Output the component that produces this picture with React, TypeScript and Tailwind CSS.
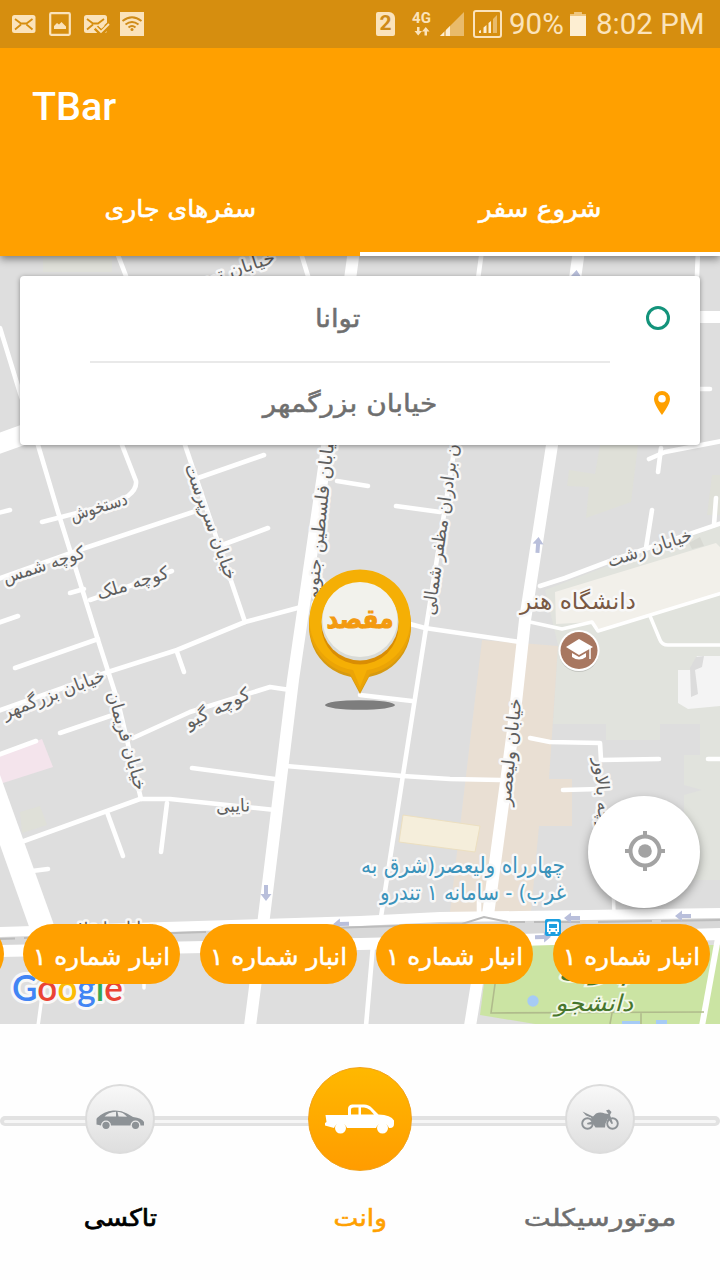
import React from "react";

type Pt = string;

const thinRoads: Pt[] = [
  "M116 250L126 276",
  "M300 250L308 276",
  "M0 328L20 393L38 445L58 512L98 640L118 702L141 799",
  "M122 445L136 481Q137 489 128 496L108 505L42 522",
  "M185 445L245 622",
  "M198 478L264 455",
  "M-2 579L85 548L193 512",
  "M222 545L268 528",
  "M70 593L84 589",
  "M-2 513L10 510",
  "M-2 623L18 616",
  "M15 668L98 639",
  "M90 600L172 571",
  "M-2 711L108 672L177 650L245 622L305 606",
  "M177 652L184 672",
  "M60 733L110 716",
  "M133 738L190 712L270 687L290 690",
  "M-2 755L36 741",
  "M192 768L275 779",
  "M24 841L107 811L140 799L170 799L275 810",
  "M107 812L123 856",
  "M167 803L161 852",
  "M32 871L48 869",
  "M286 766L403 776L450 779L500 780",
  "M482 250L455 445L426 628L403 775L381 917",
  "M373 945L366 1026",
  "M337 481L368 486",
  "M396 506L440 512",
  "M410 624L425 628L520 642",
  "M360 695L412 701",
  "M698 250L697 276",
  "M700 389L710 389",
  "M649 459L665 452L722 441",
  "M661 448L658 472",
  "M652 510L646 548",
  "M716 498L714 525",
  "M540 586L565 578L610 561L722 523",
  "M530 738L550 742L600 743L601 760L659 759",
  "M708 759L722 759",
  "M563 790L600 789",
  "M479 915L479 900",
  "M718 938L702 1026",
];

const hairRoads: Pt[] = [
  "M530 622L562 629L592 622L598 631L722 593",
  "M650 616L660 640Q662 645 668 645L722 645",
  "M613 885L614 912",
  "M42 996L38 1026",
  "M144 980L144 988",
  "M710 1016L722 1018",
];

const wideRoads: Pt[] = [
  "M354 250L328 440L293 680L263 925L250 1026",
  "M579 250L552 445L525 620L513 730L488 915L470 1026",
  "M698 317L722 317",
];

interface Label {
  t: string;
  x: number;
  y: number;
  r: number;
  w: number;
  s?: number;
  c?: string;
}

const labels: Label[] = [
  { t: "خیابان توس", x: 231, y: 272, r: -18, w: 92 },
  { t: "دستخوش", x: 99, y: 508, r: -17, w: 59 },
  { t: "کوچه شمس", x: 44, y: 566, r: -18, w: 85 },
  { t: "کوچه ملک", x: 133, y: 584, r: -17, w: 74 },
  { t: "خیابان سرپرست", x: 210, y: 522, r: 70, w: 122 },
  { t: "خیابان فلسطین جنوبی", x: 321, y: 519, r: -84, w: 176 },
  { t: "خیابان برادران مظفر شمالی", x: 444, y: 514, r: -82, w: 204 },
  { t: "خیابان بزرگمهر", x: 54, y: 695, r: -21, w: 108 },
  { t: "خیابان فریمان", x: 126, y: 741, r: 74, w: 102 },
  { t: "کوچه گیو", x: 218, y: 709, r: -26, w: 70 },
  { t: "نایبی", x: 233, y: 807, r: -2, w: 34 },
  { t: "خیابان ولیعصر", x: 511, y: 752, r: -84, w: 108 },
  { t: "خیابان رشت", x: 650, y: 549, r: -18, w: 88 },
  { t: "کوچه بالاور", x: 602, y: 799, r: 86, w: 82 },
  { t: "خیابان انقلاب", x: 110, y: 930, r: -1, w: 96 },
  { t: "دانشگاه هنر", x: 578, y: 603, r: 0, w: 116, s: 23, c: "#795944" },
  { t: "چهارراه ولیعصر(شرق به", x: 463, y: 867, r: 0, w: 204, s: 22, c: "#3b93bb" },
  { t: "غرب) - سامانه ۱ تندرو", x: 473, y: 894, r: 0, w: 186, s: 22, c: "#3b93bb" },
];

function MapLabel({ t, x, y, r, w, s = 18, c = "#5f5f5f" }: Label) {
  return (
    <text
      transform={`translate(${x} ${y}) rotate(${r})`}
      y={s * 0.27}
      textAnchor="middle"
      textLength={w}
      lengthAdjust="spacingAndGlyphs"
      direction="rtl"
      fontSize={s}
      fill={c}
      stroke="#f8f8f8"
      strokeWidth={5}
      strokeLinejoin="round"
      paintOrder="stroke"
    >
      {t}
    </text>
  );
}

function Arrow({ x, y, r }: { x: number; y: number; r: number }) {
  return (
    <path
      transform={`translate(${x} ${y}) rotate(${r})`}
      d="M0 -8L5.5 -1H2V8H-2V-1H-5.5Z"
      fill="#b9bfdb"
    />
  );
}

function CityMap() {
  return (
    <svg
      viewBox="0 256 720 768"
      className="absolute inset-0 h-full w-full font-['DejaVu_Sans',sans-serif]"
    >
      <rect x="0" y="256" width="720" height="768" fill="#dedede" />
      <path d="M43 256H112V272H43Z" fill="#dfe0d9" />
      <path d="M600 445H638L631 502L586 518L589 487L567 486L569 470L595 474Z" fill="#dfe0d8" />
      <path d="M712 475H720V515H707Z" fill="#dfe0d8" />
      <path d="M20 812L40 806L47 825L22 833Z" fill="#dfe0d8" />
      <path d="M0 755L42 739L53 767L3 783H0Z" fill="#f4e4ec" />
      <path d="M545 590L610 565L720 526V795L684 785V755H700V724H660V740H606V724H553L558 645Z" fill="#e1e3dd" />
      <path d="M684 795L720 785V880H684Z" fill="#e1e3dd" />
      <path d="M555 592L716 543L720 547V594L600 630L592 622L556 624Z" fill="#f2f0ea" />
      <path d="M689 543L700 537L704 546L692 549ZM692 547L699 552" fill="#d8d9d3" />
      <path d="M678 670H690L697 656H720V706L688 709L678 703Z" fill="#f4f4f4" />
      <path d="M690 668L696 657L704 656L702 667L695 670L698 694L691 697Z" fill="#dcdcdc" />
      <path d="M482 640L558 646L549 779H572V826H539L531 912H450Z" fill="#e9dfd3" />
      <path d="M403 815L480 826L475 852L399 842Z" fill="#f5eedb" stroke="#ecdfc0" strokeWidth="1" />
      <path d="M0 775L54 925L56 935H32L0 845Z" fill="#fff" />
      <path d="M-5 445L42 428" stroke="#fff" strokeWidth="20" />
      <g fill="none" stroke="#fff" strokeLinecap="round" strokeLinejoin="round">
        {hairRoads.map((d) => (
          <path key={d} d={d} strokeWidth="3.5" />
        ))}
        {thinRoads.map((d) => (
          <path key={d} d={d} strokeWidth="4.6" />
        ))}
        {wideRoads.map((d) => (
          <path key={d} d={d} strokeWidth="12" />
        ))}
      </g>
      <path d="M489 945H720V1024H535L480 1015Z" fill="#cbe4a3" />
      <path d="M718 938L702 1026" stroke="#fff" strokeWidth="6" />
      <path d="M497 970L491 1013L704 1012M612 1013L610 1024M641 1012V1024" fill="none" stroke="#b0bb8c" strokeWidth="1.6" />
      <circle cx="533" cy="1001" r="5.7" fill="#a6cbf5" />
      <path d="M622 1021H640V1024H622ZM656 1020H667V1024H656Z" fill="#a6cbf5" />
      <path d="M0 932L360 921L520 915L720 911V934L520 938L360 944L0 951Z" fill="#d8d8d8" />
      <path d="M-2 932L360 921L440 917L520 916L722 913" fill="none" stroke="#fff" strokeWidth="10" />
      <path d="M-2 951L360 944L520 940L722 934" fill="none" stroke="#fff" strokeWidth="12" />
      <path d="M0 939L15 938.500M24 938L206 932M215 931.500L462 924L484 917L508 922M510 922L525 922M534 922L580 922M598 922L652 921M661 921L720 920" fill="none" stroke="#bcbcbc" strokeWidth="2" />
      <Arrow x={266} y={893} r={180} />
      <Arrow x={538} y={545} r={4} />
      <Arrow x={576} y={278} r={4} />
      <Arrow x={341} y={924} r={-92} />
      <Arrow x={572} y={918} r={-90} />
      <Arrow x={683} y={916} r={-90} />
      <Arrow x={543} y={937} r={88} />
      {labels.map((l) => (
        <MapLabel key={l.t} {...l} />
      ))}
      <g direction="rtl" fontStyle="italic" fontSize="23" fill="#47762d" stroke="#f2f8e8" strokeWidth="3.500" paintOrder="stroke" textAnchor="middle">
        <text x="594" y="980" textLength="72" lengthAdjust="spacingAndGlyphs">پارک</text>
        <text x="594" y="1011" textLength="78" lengthAdjust="spacingAndGlyphs">دانشجو</text>
      </g>

      {/* university marker */}
      <circle cx="579" cy="652" r="20" fill="#00000022" />
      <circle cx="579" cy="650.500" r="20.500" fill="#fff" />
      <circle cx="579" cy="650.500" r="18.500" fill="#a87760" />
      <path d="M579 639L593 647L579 655L566 647Z" fill="#fff" />
      <path d="M572 653L579 657L586 653V657Q579 662 572 657Z" fill="#fff" />
      <path d="M590 648V659" stroke="#fff" strokeWidth="1.500" />

      {/* bus stop */}
      <rect x="545" y="919" width="16" height="17" rx="2" fill="#1d9fe0" />
      <path d="M549 921.500H557Q559 921.500 559 923.500V932H557.500V934H555.500V932H550.500V934H548.500V932H547V923.500Q547 921.500 549 921.500Z" fill="#fff" />
      <path d="M549 924H557V928H549Z" fill="#1d9fe0" />
      <circle cx="549.800" cy="930" r="0.900" fill="#1d9fe0" />
      <circle cx="556.200" cy="930" r="0.900" fill="#1d9fe0" />

      <text x="12" y="1001" textLength="111" lengthAdjust="spacingAndGlyphs" fontFamily="Lato, sans-serif" fontSize="37" fontWeight="600" stroke="#f8f8f8" strokeWidth="6" strokeLinejoin="round" paintOrder="stroke">
        <tspan fill="#4285f4">G</tspan>
        <tspan fill="#ea4335">o</tspan>
        <tspan fill="#fbbc05">o</tspan>
        <tspan fill="#4285f4">g</tspan>
        <tspan fill="#34a853">l</tspan>
        <tspan fill="#ea4335">e</tspan>
      </text>

      {/* destination pin */}
      <ellipse cx="360" cy="705" rx="35" ry="4.800" fill="#7d7d7d" />
      <path d="M351 677A51 51 0 1 1 369 677L360 694Z" fill="#d79a10" />
      <path d="M350 674A51 51 0 1 1 370 674L360 692Z" fill="#eba406" />
      <path d="M353 670A50.500 50.500 0 1 1 367 670L360 687Z" fill="#f5af05" />
      <circle cx="360" cy="626" r="38.500" fill="#d98d04" />
      <circle cx="360" cy="622" r="38.500" fill="#d9dbd7" />
      <circle cx="360" cy="619.500" r="37.500" fill="#f2f2ec" />
      <text x="360" y="628" direction="rtl" textAnchor="middle" textLength="67" lengthAdjust="spacingAndGlyphs" fontSize="26" fontWeight="700" fill="#f39a10" stroke="#f39a10" strokeWidth="1">مقصد</text>
    </svg>
  );
}

function SignalBars({ className }: { className: string }) {
  return (
    <svg viewBox="0 0 24 24" className={className}>
      <path d="M24 0V24H0Z" fill="#e9bb6b" />
      <path d="M0 24L4 20V24ZM6 24V18L10 14V24Z" fill="#fdeed2" />
    </svg>
  );
}

function StatusBar() {
  return (
    <div className="flex h-12 items-center bg-[#d68e0f] font-[Roboto,sans-serif] text-[#fbe3bb]">
      <svg viewBox="0 0 24 18" className="ml-3 h-[18px] w-6">
        <rect width="23.500" height="18" rx="2.500" fill="#fbe3bb" />
        <path d="M3 4L9 8.500H14.500L20.500 4M3 14.500L9 9.500M20.500 14.500L14.500 9.500" fill="none" stroke="#d68e0f" strokeWidth="1.800" />
      </svg>
      <svg viewBox="0 0 22 24" className="ml-[13px] h-6 w-[22px]">
        <rect x="1.200" y="1.200" width="19.600" height="21.600" rx="1" fill="none" stroke="#fbe3bb" strokeWidth="2.200" />
        <path d="M5 17V14L8 11L10 12.500L12.500 10L17 14.500V17Z" fill="#fbe3bb" />
      </svg>
      <svg viewBox="0 0 26 20" className="mt-[2px] ml-[13px] h-5 w-[26px]">
        <rect y="0" width="23" height="18" rx="2.500" fill="#fbe3bb" />
        <path d="M3 4L9 8.500H14L20 4M3 14.500L9 9.500" fill="none" stroke="#d68e0f" strokeWidth="1.800" />
        <path d="M12 12.500L17 17.500L26 9" fill="none" stroke="#d68e0f" strokeWidth="6" />
        <path d="M12 12L17 17L25 9M15 10L17.500 12.500L20 10" fill="none" stroke="#fbe3bb" strokeWidth="1.800" />
      </svg>
      <svg viewBox="0 0 24 24" className="ml-[10px] h-6 w-6">
        <rect width="24" height="24" fill="#fbe3bb" />
        <path d="M2.500 9Q12 1.500 21.500 9M5.500 12.500Q12 7.500 18.500 12.500M8.500 15.500Q12 12.500 15.500 15.500" fill="none" stroke="#cf8b18" strokeWidth="1.900" />
        <circle cx="12" cy="17.500" r="1.500" fill="#cf8b18" />
      </svg>

      <div className="ml-[232px] flex h-6 w-[19px] items-center justify-center rounded-[2px] rounded-tr-[6px] bg-[#fbe3bb] text-[21px] font-bold text-[#cf8b18]">
        2
      </div>
      <div className="ml-[16px] flex w-[21px] flex-col items-center">
        <span className="text-[15px] leading-[13px] font-bold">4G</span>
        <svg viewBox="0 0 16 9" className="mt-[2px] h-[9px] w-4">
          <path d="M3 0H5.500V4H8L4.200 8.500L0.500 4H3ZM10.500 8.500H13V4.500H15.500L11.800 0L8 4.500H10.500Z" fill="#fbe3bb" />
        </svg>
      </div>
      <SignalBars className="ml-[8px] h-6 w-6" />
      <div className="ml-[9px] flex h-7 w-[29px] items-center justify-center rounded-[3px] border-2 border-[#fbe3bb]">
        <svg viewBox="0 0 20 18" className="h-[18px] w-5">
          <path d="M1 18V16L3 15V18ZM5.500 18V12.500L8.500 10V18ZM10.500 18V8L13 6V18Z" fill="#fdeed2" />
          <path d="M15 18V4L19 0V18Z" fill="#e9bb6b" />
        </svg>
      </div>
      <span className="mt-[2px] ml-[7px] w-[55px] text-[29.5px] leading-none whitespace-nowrap">90%</span>
      <svg viewBox="0 0 16 24" className="ml-[6px] h-6 w-4">
        <path d="M4.500 0H11.500V2.500H16V24H0V2.500H4.500Z" fill="#fdeed2" />
        <path d="M4.500 0H11.500V2.500H16V4H0V2.500H4.500Z" fill="#efc67f" />
      </svg>
      <span className="mt-[2px] ml-[10px] text-[29.5px] leading-none whitespace-nowrap">8:02 PM</span>
    </div>
  );
}

function Header() {
  return (
    <header className="relative z-10 bg-[#ffa000] shadow-[0_3px_8px_rgba(0,0,0,0.45)]">
      <StatusBar />
      <div className="flex h-28 items-center pl-[32px] font-[Roboto,sans-serif] text-[39.5px] font-medium text-white">
        <h1 className="mt-[5px]">TBar</h1>
      </div>
      <nav dir="rtl" className="grid h-24 grid-cols-2 text-[24px] text-white [-webkit-text-stroke:0.6px]">
        <div className="flex items-center justify-center border-b-4 border-white pt-[6px]">
          <span className="scale-x-[1.09]">شروع سفر</span>
        </div>
        <div className="flex items-center justify-center border-b-4 border-transparent pt-[6px]">
          <span className="scale-x-[1.05]">سفرهای جاری</span>
        </div>
      </nav>
    </header>
  );
}

function RouteCard() {
  return (
    <div className="relative mx-5 mt-5 h-[169px] rounded-[4px] bg-white text-[25px] text-[#6f6f6f] shadow-[0_1px_5px_rgba(0,0,0,0.4)]">
      <div className="grid h-[85px] grid-cols-[70px_1fr_90px] items-center">
        <span />
        <span dir="rtl" className="pl-[24px] text-center [-webkit-text-stroke:0.5px]">
          <span className="inline-block -translate-x-[24px] scale-x-110">توانا</span>
        </span>
        <span className="-mt-[2px] ml-[36px] size-6 rounded-full border-[3.5px] border-[#13937b]" />
      </div>
      <div className="mx-[70px] mr-[90px] h-[2px] bg-[#e9e9e9]" />
      <div className="grid h-[82px] grid-cols-[70px_1fr_90px] items-center">
        <span />
        <span dir="rtl" className="text-center [-webkit-text-stroke:0.5px]">
          <span className="inline-block scale-x-[1.12]">خیابان بزرگمهر</span>
        </span>
        <svg viewBox="0 0 16 24" className="-mt-[2px] ml-[44px] h-6 w-4">
          <path fillRule="evenodd" d="M8 0A8 8 0 0 1 16 8C16 13 10 21 8 24C6 21 0 13 0 8A8 8 0 0 1 8 0ZM8 4A3.800 3.800 0 1 0 8 11.600A3.800 3.800 0 1 0 8 4Z" fill="#ffa000" />
        </svg>
      </div>
    </div>
  );
}

function Vehicles() {
  return (
    <footer className="relative h-64 bg-[#fefefe] text-[24px]">
      <div className="absolute top-[92px] right-0 left-0 flex h-[10px] items-center rounded-full bg-[#e2e2e2] px-1">
        <div className="h-[3px] w-full rounded-full bg-[#f6f6f6]" />
      </div>
      <div className="relative grid h-full grid-cols-3 grid-rows-[190px_66px] items-center justify-items-center">
        <div className="flex size-[70px] items-center justify-center rounded-full border-2 border-[#dcdcdc] bg-linear-to-b from-[#f8f8f8] to-[#dedede]">
          <svg viewBox="0 0 48 19" className="h-[19px] w-12">
            <path fillRule="evenodd" d="M1 8Q8 1.500 17 0.600Q25 0 31 3.500L37 7Q46 8 48 12V15.500H44.500A5 5 0 0 0 34.500 15.500H15A5 5 0 0 0 5 15.500L0.500 14.500V9ZM8.500 6.500L20 6.500V1.800Q12 2.500 8.500 6.500ZM21.500 1.800L22.500 6.500L31 6.800Q27 2 21.500 1.800Z" fill="#8d9296" />
            <circle cx="10" cy="15.300" r="3.600" fill="#8d9296" />
            <circle cx="39.500" cy="15.300" r="3.600" fill="#8d9296" />
          </svg>
        </div>
        <div className="flex size-[104px] items-center justify-center rounded-full border border-[#f2a21a] bg-linear-to-b from-[#ffb800] to-[#ff9c00]">
          <svg viewBox="0 0 70 30" className="h-[30px] w-[70px]">
            <path fillRule="evenodd" d="M0.500 11H23V5Q23 1 27 0.500H39Q44 0.500 47 4L53.500 10.500Q66 11 69 16.500V20Q69 24 65 24H64A7 7 0 0 0 51 24H22A7 7 0 0 0 9 24L0 21.500V19L1.500 18ZM26 10.500H33.500V3.500H29Q26 3.500 26 5.500ZM36 3.500V10.500H49L45 6Q42 3.500 39 3.500Z" fill="#fff" />
            <circle cx="15.500" cy="24" r="5.500" fill="#fff" />
            <circle cx="57.500" cy="24" r="5.500" fill="#fff" />
          </svg>
        </div>
        <div className="flex size-[70px] items-center justify-center rounded-full border-2 border-[#dcdcdc] bg-linear-to-b from-[#f8f8f8] to-[#dedede]">
          <svg viewBox="0 0 38 21" className="h-[21px] w-[38px]">
            <circle cx="6.500" cy="14.500" r="5.300" fill="none" stroke="#8d9296" strokeWidth="1.900" />
            <circle cx="31.500" cy="14.500" r="5.300" fill="none" stroke="#8d9296" strokeWidth="1.900" />
            <path d="M1.500 2.500L12 7.500L15 4.500Q19 2.500 24 4.500L27.500 5L25 1.500L28 0.500L30.500 3L29 6L32 14.500L30.500 15L27 9.500L24.500 14.500L24 18.500H14.500L12.500 15.500H6.500L6 14L11 12.500L10 8.500L5 6.500Z" fill="#8d9296" />
          </svg>
        </div>
        <span dir="rtl" className="-translate-y-[29px] scale-x-110 text-black [-webkit-text-stroke:0.7px]">تاکسی</span>
        <span dir="rtl" className="-translate-y-[29px] scale-x-110 text-[#ffa000] [-webkit-text-stroke:0.6px]">وانت</span>
        <span dir="rtl" className="-translate-y-[29px] scale-x-[1.19] text-[#6f6f6f] [-webkit-text-stroke:0.5px]">موتورسیکلت</span>
      </div>
    </footer>
  );
}

export default function App() {
  return (
    <div className="flex h-[1280px] w-[720px] flex-col overflow-hidden bg-white font-['DejaVu_Sans',sans-serif]">
      <Header />
      <main className="relative flex h-[768px] flex-col overflow-hidden">
        <CityMap />
        <RouteCard />
        <div className="relative mt-auto mr-5 mb-4 flex size-28 items-center justify-center self-end rounded-full bg-white shadow-[0_4px_10px_rgba(0,0,0,0.35)]">
          <svg viewBox="0 0 40 40" className="mb-[2px] ml-[2px] size-10">
            <circle cx="20" cy="20" r="14.500" fill="none" stroke="#a3a3a3" strokeWidth="4" />
            <circle cx="20" cy="20" r="6.800" fill="#a3a3a3" />
            <path d="M20 0V6M20 34V40M0 20H6M34 20H40" stroke="#a3a3a3" strokeWidth="4" />
          </svg>
        </div>
        <div dir="rtl" className="relative mb-10 flex h-[60px] gap-[19.6px] pr-[10px] text-[24px] text-white [-webkit-text-stroke:0.5px]">
          {[0, 1, 2, 3, 4].map((i) => (
            <button key={i} className="flex w-[157px] shrink-0 items-center justify-center rounded-full bg-[#ffa000] pt-[5px] whitespace-nowrap">
              <span className="scale-x-[1.03]">انبار شماره ۱</span>
            </button>
          ))}
        </div>
      </main>
      <Vehicles />
    </div>
  );
}
